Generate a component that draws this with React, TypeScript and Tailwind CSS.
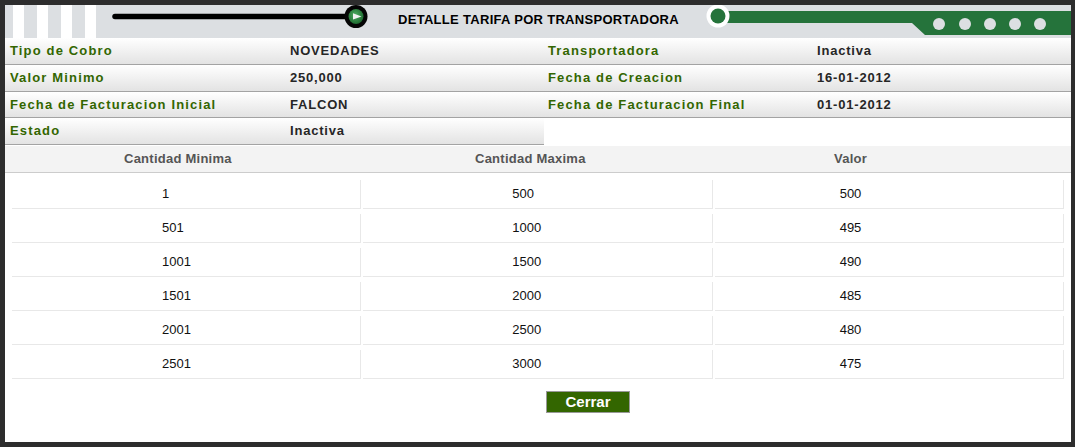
const info: [string, string, string?, string?][] = [
  ["Tipo de Cobro", "NOVEDADES", "Transportadora", "Inactiva"],
  ["Valor Minimo", "250,000", "Fecha de Creacion", "16-01-2012"],
  ["Fecha de Facturacion Inicial", "FALCON", "Fecha de Facturacion Final", "01-01-2012"],
  ["Estado", "Inactiva"],
];

const alturas = ["h-[27px]", "h-[27px]", "h-[26px]", "h-[27px]"];

const rangos = [
  ["1", "500", "500"],
  ["501", "1000", "495"],
  ["1001", "1500", "490"],
  ["1501", "2000", "485"],
  ["2001", "2500", "480"],
  ["2501", "3000", "475"],
];

function Slider() {
  return (
    <svg width="274" height="33" viewBox="0 0 274 33" className="shrink-0">
      <defs>
        <radialGradient id="knob" cx="45%" cy="40%" r="60%">
          <stop offset="0%" stopColor="#4fae62" />
          <stop offset="100%" stopColor="#1d6a2f" />
        </radialGradient>
      </defs>
      <line x1="19" y1="11.5" x2="252" y2="11.5" stroke="#000" strokeWidth="5.5" strokeLinecap="round" />
      <circle cx="260" cy="11.5" r="11.5" fill="#050505" />
      <circle cx="260" cy="11.5" r="7.5" fill="url(#knob)" />
      <polygon points="257,8.2 257,14.6 265.5,11.4" fill="#f2f2f2" />
    </svg>
  );
}

function Decoracion() {
  return (
    <svg width="381" height="33" viewBox="0 0 381 33" className="shrink-0">
      <polygon points="28,6 381,6 381,30 235,30 222,18 28,18" fill="#25733b" />
      <circle cx="28" cy="11" r="11.5" fill="#fff" />
      <circle cx="28" cy="11" r="7.5" fill="#25733b" />
      {[249, 275, 300, 325, 350].map((x) => (
        <circle key={x} cx={x} cy="19" r="6" fill="#dcdfe2" />
      ))}
    </svg>
  );
}

export default function App() {
  return (
    <div className="h-[447px] w-[1075px] bg-[#2d2d2d] pt-[5px] pl-[5px] pr-[4px] pb-[5px] font-['Liberation_Sans',Arial,sans-serif]">
      <div className="flex h-full flex-col bg-white">
        {/* cabecera */}
        <div className="flex h-[33px] shrink-0 items-start bg-[#dcdfe2] pl-[8px]">
          <div className="flex h-full gap-[13px]">
            <div className="h-full w-[11px] bg-white" />
            <div className="h-full w-[11px] bg-white" />
            <div className="h-full w-[11px] bg-white" />
            <div className="h-full w-[11px] bg-white" />
          </div>
          <Slider />
          <div className="ml-[28px] mt-[7px] w-[292px] text-[13px] leading-[15px] font-bold tracking-[0.3px] text-black">
            DETALLE TARIFA POR TRANSPORTADORA
          </div>
          <Decoracion />
        </div>

        {/* datos */}
        <div className="grid grid-cols-[281px_258px_269px_1fr]">
          {info.map((row, i) =>
            [0, 1, 2, 3].map((j) =>
              row[j] === undefined ? (
                <div key={i + "-" + j} />
              ) : (
                <div
                  key={i + "-" + j}
                  className={
                    alturas[i] +
                    " border-b border-[#a3a3a3] bg-gradient-to-b from-white to-[#e3e3e3] text-[13px] leading-[25px] font-bold " +
                    (j === 0 ? "pl-[5px] " : "pl-[4px] ") +
                    (j % 2 === 0 ? "tracking-[1.15px] text-[#336600]" : "tracking-[0.8px] text-[#262626]")
                  }
                >
                  {row[j]}
                </div>
              )
            )
          )}
        </div>

        {/* encabezado tabla */}
        <div className="mt-[1px] grid h-[27px] grid-cols-[351px_359px_1fr] border-b border-[#cccccc] bg-[#f3f3f3] text-[13px] leading-[25px] font-bold tracking-[0.25px] text-[#555555]">
          <div className="pl-[119px]">Cantidad Minima</div>
          <div className="pl-[119px]">Cantidad Maxima</div>
          <div className="pl-[119px]">Valor</div>
        </div>

        {/* filas */}
        <div className="ml-[7px] mt-[7px] grid w-[1052px] grid-cols-3 gap-x-[2px] gap-y-[5px] text-[13px] text-[#111111]">
          {rangos.map((r) =>
            r.map((v, j) => (
              <div
                key={r[0] + "-" + j}
                className={
                  "h-[29px] border-r border-b border-[#e8e8e8] leading-[28px] " +
                  (j === 0 ? "pl-[150px]" : j === 1 ? "pl-[149px]" : "pl-[125px]")
                }
              >
                {v}
              </div>
            ))
          )}
        </div>

        <div className="mt-[11px] pl-[541px]">
          <button className="h-[22px] w-[84px] border border-[#999999] bg-[#336600] text-[15px] leading-[18px] font-bold text-white">
            Cerrar
          </button>
        </div>
      </div>
    </div>
  );
}
